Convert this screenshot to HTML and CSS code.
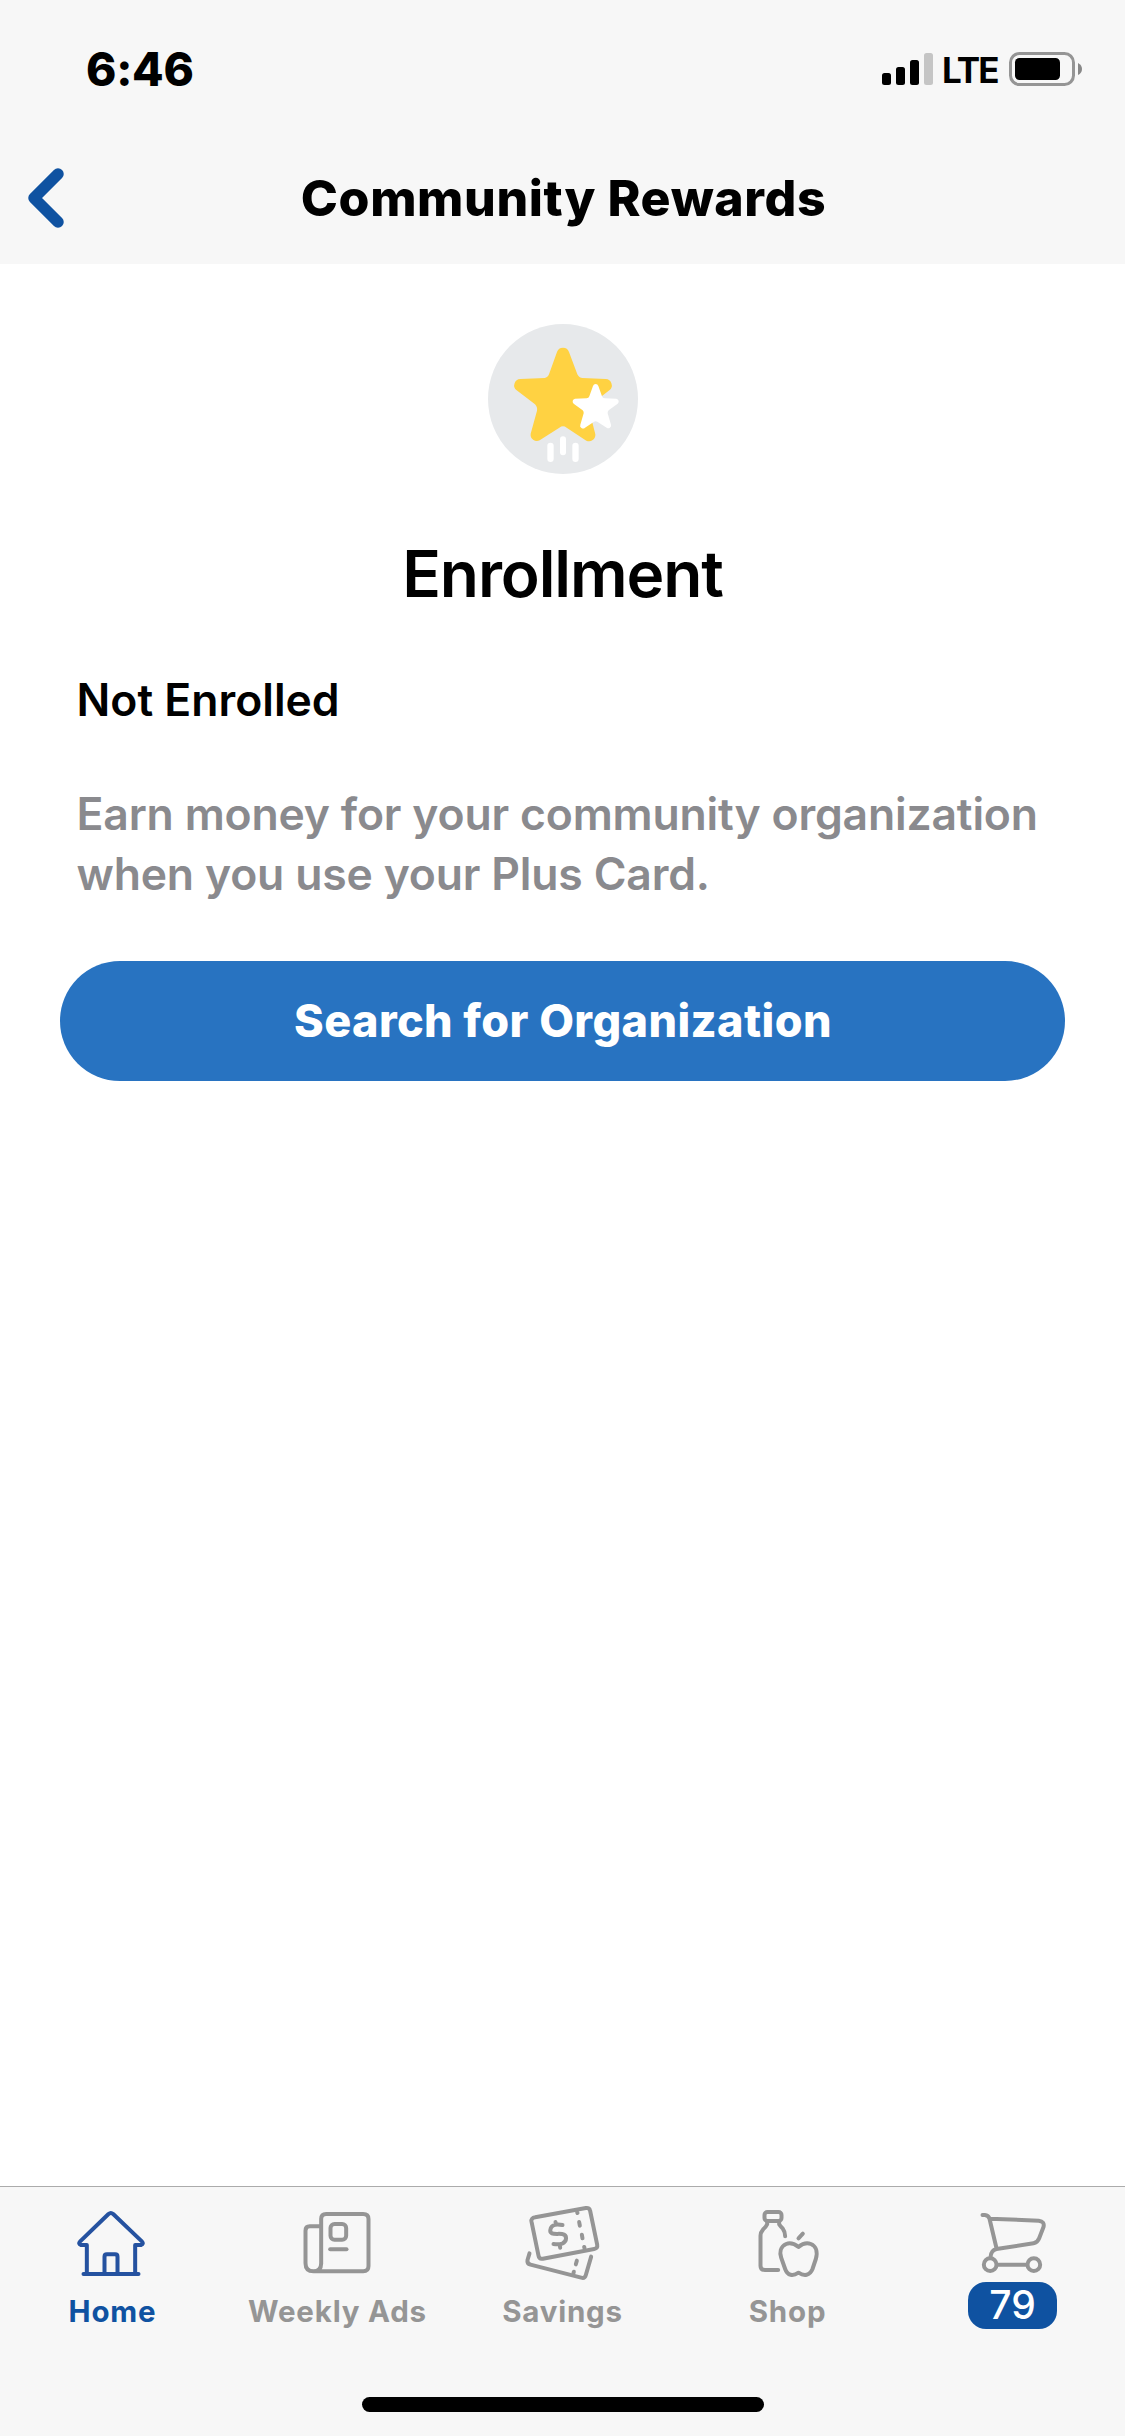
FILE: index.html
```html
<!DOCTYPE html>
<html lang="en">
<head>
<meta charset="utf-8">
<title>Community Rewards</title>
<link rel="stylesheet" href="styles.css">
</head>
<body>
<div class="screen">
  <header class="header">
    <div class="status-bar">
      <span class="time">6:46</span>
      <div class="status-icons">
        <svg class="signal" viewBox="0 0 51 32">
          <rect x="0" y="20" width="9" height="12" rx="2.5"/>
          <rect x="14" y="14" width="9" height="18" rx="2.5"/>
          <rect x="28" y="7" width="9" height="25" rx="2.5"/>
          <rect class="signal-off" x="42" y="0" width="9" height="32" rx="2.5"/>
        </svg>
        <span class="network">LTE</span>
        <svg class="battery" viewBox="0 0 74 34">
          <rect class="battery-case" x="1.5" y="1.5" width="63" height="31" rx="9"/>
          <rect x="6" y="6" width="45" height="22" rx="4.5"/>
          <path class="battery-tip" d="M69 11Q73 13 73 17T69 23Z"/>
        </svg>
      </div>
    </div>
    <div class="nav-bar">
      <svg class="back" viewBox="0 0 36 60"><path d="M30 6L6 30L30 54"/></svg>
      <h1 class="nav-title">Community Rewards</h1>
    </div>
  </header>

  <main class="content">
    <svg class="reward-icon" viewBox="54 42 450 450">
      <circle cx="279" cy="267" r="225" fill="#e7e9eb"/>
      <path fill="#ffd242" d="M261 126A19 19 0 0 1 297 126L322 193Q327 204 338 204L407 207A19 19 0 0 1 418 241L364 283Q356 291 358 302L376 373A19 19 0 0 1 349 392L290 353Q279 345 268 353L209 391A19 19 0 0 1 182 371L201 302Q203 291 195 283L140 241A19 19 0 0 1 151 207L224 204Q233 203 237 193Z"/>
      <path fill="#fff" d="M369 228A8.500 8.500 0 0 1 385 228L396 259Q398 265 404 265L439 266A8.500 8.500 0 0 1 443 281L416 301Q412 305 413 310L423 344A8.500 8.500 0 0 1 410 353L382 335Q377 332 372 335L345 353A8.500 8.500 0 0 1 331 344L341 310Q342 305 338 301L311 281A8.500 8.500 0 0 1 315 266L350 265Q356 265 358 259Z"/>
      <g fill="#fff">
        <rect x="232" y="398" width="19" height="58" rx="9.500"/>
        <rect x="270" y="379" width="18" height="57" rx="9"/>
        <rect x="307" y="398" width="19" height="58" rx="9.500"/>
      </g>
    </svg>
    <h2 class="heading">Enrollment</h2>
    <p class="status">Not Enrolled</p>
    <p class="description">Earn money for your community organization<br>when you use your Plus Card.</p>
    <button class="button" type="button">Search for Organization</button>
  </main>

  <nav class="tab-bar">
    <a class="tab tab-active">
      <svg class="tab-icon" viewBox="67.500 96 240 240">
        <path d="M112 309V225H94Q85 221 92 214L177 132Q184 126 191 132L277 214Q284 221 275 225H257V309M102 312H267M165 309V260Q165 253 172 253H197Q204 253 204 260V309"/>
      </svg>
      <span class="tab-label">Home</span>
    </a>
    <a class="tab">
      <svg class="tab-icon" viewBox="742.500 96 240 240">
        <path d="M815 282V147Q815 132 830 132H941Q957 132 957 147V288Q957 304 941 304H792Q768 304 768 280V182Q768 169 781 169H813M815 280Q815 304 792 304"/>
        <rect x="843" y="162" width="47" height="47" rx="12"/>
        <path d="M842 238H891"/>
      </svg>
      <span class="tab-label">Weekly Ads</span>
    </a>
    <a class="tab">
      <svg class="tab-icon" viewBox="157.500 96 240 240">
        <path d="M194 142L346 114Q357 112 359 123L380 224Q382 235 371 237L217 266Q206 268 204 257L183 155Q181 144 194 142Z"/>
        <path d="M177 250L171 270Q169 281 180 284L332 323Q343 326 346 315L362 260"/>
        <path d="M320 127L321 129M326 156L328 167M334 194L336 205M341 231L342 234M319 272L316 283M310 305L309 309"/>
        <path d="M276 165C262 162 243 163 240 177C235 197 258 190 275 192C291 194 290 215 275 221C265 224 255 223 249 222M255 156L256 162M268 225L269 233"/>
      </svg>
      <span class="tab-label">Savings</span>
    </a>
    <a class="tab">
      <svg class="tab-icon" viewBox="832.500 96 240 240">
        <rect x="882" y="126" width="51" height="27" rx="9"/>
        <path d="M890 155V163Q887 170 878 178Q870 187 870 197V287Q870 300 883 300H923M926 155V163Q931 170 937 176Q944 185 944 199"/>
        <path d="M984 231C970 220 957 218 947 222C929 230 927 248 932 263L944 297C951 317 967 319 984 308C1001 319 1018 317 1026 297L1036 267C1042 246 1037 228 1021 222C1010 218 997 220 984 231ZM984 205L997 191"/>
      </svg>
      <span class="tab-label">Shop</span>
    </a>
    <a class="tab">
      <svg class="tab-icon" viewBox="217.500 96 240 240">
        <path d="M246 135H253Q264 136 267 146L415 152Q433 154 429 171L416 205Q411 218 399 220L288 237Q271 241 270 262M267 146L288 235M292 284H376"/>
        <circle cx="269" cy="284" r="19"/>
        <circle cx="400" cy="284" r="19"/>
      </svg>
      <span class="badge">79</span>
    </a>
    <div class="home-indicator"></div>
  </nav>
</div>
</body>
</html>
```
FILE: styles.css
```css
* { box-sizing: border-box; }

body {
  margin: 0;
  background: #fff;
  color: #000;
  font-family: Inter, "Liberation Sans", sans-serif;
}

.screen {
  display: flex;
  flex-direction: column;
  width: 1125px;
  height: 2436px;
}

.header { height: 264px; background: #f7f7f7; }

.status-bar {
  display: flex;
  align-items: center;
  justify-content: space-between;
  height: 138px;
  padding: 0 42px 0 86px;
}

.time { font-size: 46px; font-weight: 800; line-height: 60px; letter-spacing: -0.3px; }

.status-icons { display: flex; align-items: center; }
.signal { width: 51px; height: 32px; }
.signal-off { fill: #c5c5c5; }

.network {
  width: 56px;
  margin: 2px 11px 0 9px;
  font-size: 35px;
  font-weight: 700;
  line-height: 40px;
  letter-spacing: -1.9px;
}

.battery { width: 74px; height: 34px; }
.battery-case { fill: none; stroke: #959595; stroke-width: 3; }
.battery-tip { fill: #888; }

.nav-bar {
  display: grid;
  grid-template-columns: 120px 1fr 120px;
  align-items: center;
  height: 120px;
}

.back {
  width: 36px;
  height: 60px;
  margin-left: 28px;
  fill: none;
  stroke: #0f52a1;
  stroke-width: 11.5;
  stroke-linecap: round;
  stroke-linejoin: round;
}

.nav-title {
  margin: 0;
  padding-left: 2px;
  font-size: 50px;
  font-weight: 800;
  line-height: 60px;
  letter-spacing: 0.6px;
  text-align: center;
  white-space: nowrap;
}

.content {
  display: flex;
  flex: 1;
  flex-direction: column;
  min-height: 0;
  padding: 60px 60px 0;
}

.reward-icon { width: 150px; height: 150px; align-self: center; }

.heading {
  margin: 60px 0 0;
  font-size: 64px;
  font-weight: 600;
  line-height: 80px;
  letter-spacing: -1.1px;
  text-align: center;
}

.status {
  margin: 56px 16.5px 0;
  font-size: 44.5px;
  font-weight: 600;
  line-height: 60px;
}

.description {
  margin: 54px 16.5px 0;
  color: #8a8a8e;
  font-size: 44.5px;
  font-weight: 600;
  line-height: 60px;
  white-space: nowrap;
  letter-spacing: -0.18px;
}

.button {
  height: 120px;
  margin: 57px 0 0;
  padding: 0 0 0 1px;
  border: 0;
  border-radius: 60px;
  background: #2873c1;
  color: #fff;
  font: 800 45px/60px Inter, "Liberation Sans", sans-serif;
  letter-spacing: 0.4px;
}

.tab-bar {
  display: grid;
  grid-template-columns: repeat(5, 1fr);
  grid-template-rows: 195px 15px;
  justify-items: center;
  height: 250px;
  padding-top: 15px;
  border-top: 1px solid #ababab;
  background: #f7f7f7;
}

.tab {
  display: flex;
  flex-direction: column;
  align-items: center;
  color: #959595;
}

.tab-active { color: #0f52a1; }

.tab-icon {
  width: 80px;
  height: 80px;
  fill: none;
  stroke: #959595;
  stroke-width: 12;
  stroke-linecap: round;
  stroke-linejoin: round;
}

.tab-active .tab-icon { stroke: #2552a0; }

.tab-label {
  margin-top: 11px;
  font-size: 29.5px;
  font-weight: 700;
  line-height: 36px;
  letter-spacing: 0.8px;
  white-space: nowrap;
}

.badge {
  width: 89px;
  height: 47px;
  border-radius: 18px;
  background: #0f52a1;
  color: #fff;
  font-size: 39px;
  font-weight: 500;
  line-height: 46px;
  text-align: center;
}

.home-indicator {
  grid-column: 1 / -1;
  width: 402px;
  height: 15px;
  border-radius: 8px;
  background: #000;
}
```
